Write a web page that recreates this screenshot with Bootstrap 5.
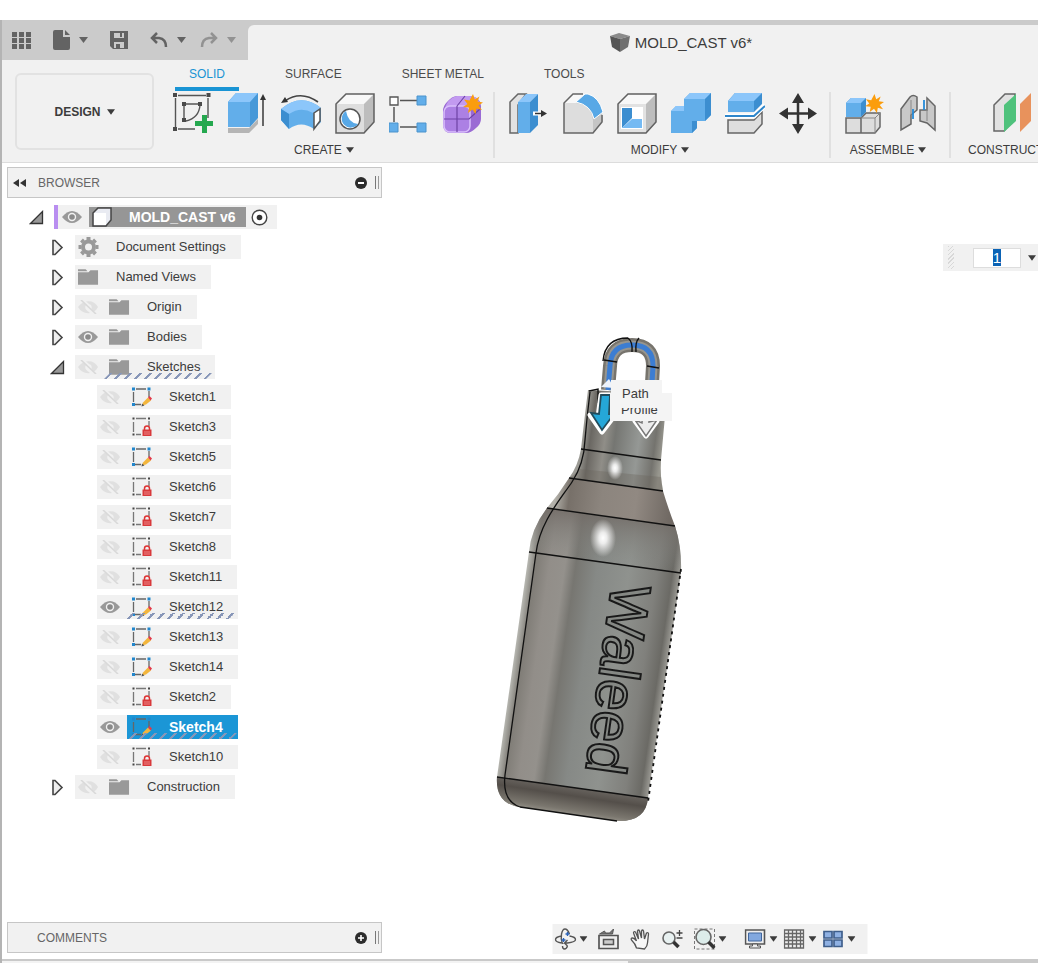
<!DOCTYPE html>
<html lang="en">
<head>
<meta charset="utf-8">
<meta name="viewport" content="width=device-width, initial-scale=1">
<title>MOLD_CAST v6</title>
<link rel="stylesheet" href="https://cdn.jsdelivr.net/npm/bootstrap@5.3.0/dist/css/bootstrap.min.css">
<style>
  body { font-family: "Liberation Sans", Arial, sans-serif; font-size: 12px; line-height: 16px; color: #3c3c3c; background: #fff; padding-top: 20px; overflow-x: hidden; }
  button { background: none; border: 0; padding: 0; color: inherit; line-height: inherit; }
  svg { display: block; flex: none; }
  .app-shell { border-left: 2px solid #b4b4b4; }
  .title-bar { background: #cbcbcb; height: 40px; }
  .quick-tools { width: 246px; padding-left: 10px; gap: 22px; color: #636363; }
  .undo-tools { gap: 14px; }
  .redo-btn { color: #929292; }
  .doc-tab { background: #f1f1f1; border-top-left-radius: 6px; margin-top: 5px; padding-left: 76px; font-size: 15px; gap: 5px; }
  .ribbon { background: #f1f1f1; border-bottom: 1px solid #dcdcdc; height: 103px; }
  .workspace-btn { width: 139px; height: 77px; margin: 13px 19px 0 13px; border: 2px solid #e2e2e2; border-radius: 6px; font-weight: bold; gap: 6px; }
  .ribbon-tabs { gap: 32px; height: 31px; padding-left: 2px; }
  .ribbon-tabs a { color: #4b4b4b; text-decoration: none; padding: 6px 14px 0; border-bottom: 4px solid transparent; }
  .ribbon-tabs a.active { color: #1a94d4; border-color: #1a94d4; }
  .tool-group { border-right: 2px solid #e0e0e0; padding: 0 10px 0 14px; height: 66px; margin-top: 1px; }
  .tool-group:first-child { padding-left: 0; }
  .tool-group:last-child { border: 0; padding-left: 17px; }
  .tool-icons { gap: 14px; height: 50px; padding-top: 1px; }
  .group-label { gap: 4px; padding-right: 8px; }
  .tool-group:last-child .group-label { padding-right: 0; }
  .browser-side { width: 380px; padding: 4px 0 6px 5px; }
  .panel-head { height: 31px; border: 1px solid #c6c6c6; background: #f1f1f1; color: #666; padding: 0 2px 0 5px; }
  .grip { width: 4px; height: 13px; border-left: 1px solid #777; border-right: 1px solid #999; }
  .tree { margin: 4px 0 0; font-size: 13px; }
  .tree li { height: 30px; }
  .twist { width: 25px; }
  .lv0 { padding-left: 22px; }
  .lv1 { padding-left: 43px; }
  .lv2 { padding-left: 90px; }
  .chip { background: #f1f1f1; height: 24px; padding: 0 15px 0 3px; }
  .chip-eye { margin-right: 11px; }
  .chip-item { gap: 17px; height: 24px; position: relative; }
  .root-chip { border-left: 4px solid #b98ef0; padding: 0 9px 0 4px; }
  .root-item { background: #969696; color: #fff; font-weight: bold; font-size: 14px; height: 20px; padding: 0 10px 0 2px; margin: 0 5px 0 7px; }
  .picked { background: #1b96d6; color: #fff; font-weight: bold; font-size: 14px; padding: 0 15px 0 4px; margin: 0 -15px 0 -4px; }
  .hatched::after { content: ""; position: absolute; left: -2px; right: -9px; bottom: 0; height: 6px; transform: skewX(-45deg); background: repeating-linear-gradient(90deg, #8796b8 0 3px, transparent 3px 10px); }
  .picked.hatched::after { right: 4px; left: 4px; }
  .viewport { min-height: 680px; }
  .model { position: absolute; left: 108px; top: 167px; }
  .tip { position: absolute; background: #f4f4f4; font-size: 13px; height: 28px; line-height: 28px; padding: 0 11px; }
  .tip-path { left: 121px; top: 50px; width: 51px; }
  .tip-profile { left: 120px; top: 63px; width: 62px; line-height: 33px; }
  .count-box { position: absolute; right: 0; top: 81px; background: #f1f1f1; height: 27px; padding: 0 2px 0 5px; }
  .count-grip { width: 6px; height: 23px; background: repeating-linear-gradient(135deg, #d8d8d8 0 1px, transparent 1px 3px); margin-right: 19px; }
  .count-box input { width: 48px; height: 20px; border: 1px solid #ddd; background: #fff; text-align: center; font-size: 15px; padding: 0; outline: 0; margin-right: 7px; border-radius: 0; }
  .count-box input::selection { background: #0b63b5; color: #fff; }
  .nav-tools { position: absolute; left: 50%; bottom: 5px; transform: translateX(-50%); background: #f1f1f1; height: 30px; padding: 0 12px 0 2px; gap: 10px; }
  .nav-tools button { gap: 3px; }
  .quick-tools button { gap: 9px; }
  .view-tools { gap: 6px; margin-left: 8px; }
  .timeline { height: 4px; background: #c9c9c9; border-top: 2px solid #c9c9c9; }
  .timeline div { width: 60.400%; background: #f3f3f3; }
</style>
</head>
<body class="d-flex flex-column min-vh-100">

<svg width="0" height="0" class="position-absolute" aria-hidden="true">
  <defs>
    <symbol id="caret" viewBox="0 0 9 6"><path d="M0 0h9L4.500 6z" fill="currentColor"/></symbol>
    <symbol id="eye" viewBox="0 0 20 14"><path d="M0 7Q5 1 10 1T20 7Q15 13 10 13T0 7z" fill="#999"/><circle cx="10" cy="7" r="4.200" fill="#f1f1f1"/><circle cx="10" cy="7" r="2.800" fill="#8a8a8a"/></symbol>
    <symbol id="eye-off" viewBox="0 0 20 14"><path d="M0 7Q2 4 5 2.500L8 5Q6 8 9 10.500L12 13Q4 14 0 7zM8 1.500Q16 0 20 7Q18.500 10 16 11.500L13.500 9Q14.500 5 11 4z" fill="#e0e0e0"/><path d="M3 0L18 14" stroke="#d9d9d9" stroke-width="1.600"/></symbol>
    <symbol id="folder" viewBox="0 0 22 18"><path d="M0 1h8l2 2H0zM0 4h11l2-2h8v15H0z" fill="#999"/></symbol>
    <symbol id="open" viewBox="0 0 15 15"><path d="M13.500 1.500v12h-12z" fill="#999" stroke="#333" stroke-width="1.300"/></symbol>
    <symbol id="shut" viewBox="0 0 15 17"><path d="M3 1.500h2l7 7-7 7H3z" fill="#eee" stroke="#444" stroke-width="1.600"/></symbol>
    <symbol id="sk-edit" viewBox="0 0 21 20"><path d="M5 2h10M2.500 5v10M18 4v6M4 17.500h6" stroke="#666" stroke-width="1.300" fill="none"/><path d="M1 .500h3v3H1zM16.500.500h3v3h-3zM1 16h3v3H1z" fill="#2186cc"/><path d="M11 18.500l1-3 5-5 3 3-5 4z" fill="#f3b63d"/><path d="M17 10.500l1.500-1.500 2.500 2.500-1.500 2z" fill="#e23b4a"/><path d="M10.500 19.500l.5-3 2.500 2z" fill="#555"/></symbol>
    <symbol id="sk-lock" viewBox="0 0 21 20"><path d="M5 1.500h10M2.500 5v10M18 4v5M5 17.500h5" stroke="#777" stroke-width="1.300" fill="none"/><path d="M1.500 .500h2v2h-2zM17 .500h2v2h-2zM1.500 16.500h2v2h-2z" fill="#444"/><path d="M13.500 13v-1.500q0-2.500 2.500-2.500t2.500 2.500v1.500" fill="none" stroke="#d33" stroke-width="1.500"/><path d="M11.500 12.500h9v6.500h-9z" fill="#d83a3c"/><path d="M13 15h6M13 17h6" stroke="#f29a9a" stroke-width=".8"/></symbol>
    <symbol id="spark" viewBox="0 0 20 20"><path d="M10 0l1.800 5.500L16.500 2.500 14.500 7.500 20 8.500 15.500 11.500 19 16 13.500 14.500 12.500 20 9.500 15.500 5 19 6 13.500 0 13 4.500 10 1 5.500 6.500 6.500z" fill="#fb9d0d"/></symbol>
  </defs>
</svg>

<div class="app-shell d-flex flex-column flex-grow-1">
  <header class="title-bar d-flex">
    <div class="quick-tools d-flex align-items-center flex-shrink-0">
      <button aria-label="Data panel"><svg width="19" height="19" viewBox="0 0 19 19" fill="currentColor"><path d="M0 1h5v5H0zM7 1h5v5H7zM14 1h5v5h-5zM0 7h5v5H0zM7 7h5v5H7zM14 7h5v5h-5zM0 13h5v5H0zM7 13h5v5H7zM14 13h5v5h-5z"/></svg></button>
      <button class="d-flex align-items-center" aria-label="File"><svg width="17" height="20" viewBox="0 0 17 20" fill="currentColor"><path d="M2 0h8v7h7v11q0 2-2 2H2q-2 0-2-2V2Q0 0 2 0zM12 0l5 5h-5z"/></svg><svg width="9" height="6"><use href="#caret"/></svg></button>
      <button aria-label="Save"><svg width="18" height="18" viewBox="0 0 18 18"><path d="M0 0h18v18H3l-3-3z" fill="currentColor"/><path d="M4 2h10v5H4zM4 11h10v6H4z" fill="#cbcbcb"/><path d="M10 2h2v4h-2zM6 13h4v5H6z" fill="currentColor"/></svg></button>
      <div class="undo-tools d-flex">
        <button class="d-flex align-items-center" aria-label="Undo"><svg width="18" height="16" viewBox="0 0 18 16" fill="none" stroke="currentColor" stroke-width="2.500"><path d="M7 1L2 6l5 5M2 6h7q7 1 7 9"/></svg><svg width="9" height="6"><use href="#caret"/></svg></button>
        <button class="redo-btn d-flex align-items-center" aria-label="Redo"><svg width="18" height="16" viewBox="0 0 18 16" fill="none" stroke="currentColor" stroke-width="2.500"><path d="M11 1l5 5-5 5M16 6H9q-7 1-7 9"/></svg><svg width="9" height="6"><use href="#caret"/></svg></button>
      </div>
    </div>
    <div class="doc-tab d-flex flex-grow-1 align-items-center justify-content-center">
      <svg width="20" height="19" viewBox="0 0 20 19"><path d="M0 3L9 0l11 3-10 3z" fill="#8a8a8a"/><path d="M0 3l10 3v13L2 14z" fill="#555"/><path d="M10 6l10-3-2 11-8 5z" fill="#707070"/></svg>
      <span>MOLD_CAST v6*</span>
    </div>
  </header>

  <section class="ribbon d-flex overflow-hidden">
    <button class="workspace-btn d-flex flex-shrink-0 align-items-center justify-content-center">DESIGN <svg width="8" height="6"><use href="#caret"/></svg></button>
    <div>
      <nav class="ribbon-tabs d-flex">
        <a href="#" class="active">SOLID</a><a href="#">SURFACE</a><a href="#">SHEET METAL</a><a href="#">TOOLS</a>
      </nav>
      <div class="d-flex">
        <div class="tool-group flex-shrink-0">
          <div class="tool-icons d-flex align-items-start">
            <button aria-label="Create sketch"><svg width="40" height="42" viewBox="0 0 40 42"><path d="M5 2.500h28M2.500 5v30M35 5v20M5 36h17M13 11h13M11 13v14M27 12q-1 13-14 16" fill="none" stroke="#555" stroke-width="1.400"/><path d="M0 0h4v4H0zM33.500 0h4v4h-4zM0 34h4v4H0zM9 9h4v4H9zM25 9h4v4h-4zM9 25h4v4H9z" fill="#4a4a4a"/><path d="M29 22h5v6h6v5h-6v7h-5v-7h-7v-5h7z" fill="#25a84f"/></svg></button>
            <button aria-label="Extrude"><svg width="40" height="42" viewBox="0 0 40 42"><path d="M1 35h21l9-9v5l-9 9H1z" fill="#b5b5b5"/><path d="M1 9l8-9h22v25l-8 9H1z" fill="#4698d8"/><path d="M1 9l8-9h22l-8 9z" fill="#8cc6fa"/><path d="M1 9h22v25H1z" fill="#62aeea"/><path d="M36 33V4" stroke="#444" stroke-width="1.600"/><path d="M36 1l-3 6h6z" fill="#333"/></svg></button>
            <button aria-label="Revolve"><svg width="40" height="42" viewBox="0 0 40 42"><path d="M0 16Q20-1 40 15v14l-7 7q-13-9-25 0l-8-9z" fill="#62aeea"/><path d="M0 16Q20-1 40 15l-8 5q-12-7-24 1z" fill="#8cc6fa"/><path d="M0 16l8 5v15l-8-9z" fill="#3c8ed0"/><path d="M33 20l6-4v12l-6 8z" fill="#fff" stroke="#555" stroke-width="1.500"/><path d="M4 8Q20-3 37 9" fill="none" stroke="#444" stroke-width="1.600"/><path d="M0 10l4-6 3 5z" fill="#333"/></svg></button>
            <button aria-label="Hole"><svg width="40" height="42" viewBox="0 0 40 42"><path d="M1 11L11 1h28v28L29 40H1z" fill="#bdbdbd"/><path d="M1 11L11 1h28L29 11z" fill="#f8f8f8"/><path d="M1 11h28v29H1z" fill="#dedede"/><path d="M1 11L11 1h28v28L29 40H1z" fill="none" stroke="#606060" stroke-width="1.500"/><circle cx="15" cy="26" r="10" fill="#fff" stroke="#555" stroke-width="1.500"/><path d="M11 18a9 9 0 1 0 12 13q-10-1-12-13z" fill="#58a8e6"/></svg></button>
            <button aria-label="Pattern"><svg width="40" height="42" viewBox="0 0 40 42"><path d="M11 7.500h17M5 14v15M11 34h17" stroke="#555" stroke-width="1.500"/><path d="M1 4h8v8H1z" fill="#fff" stroke="#555" stroke-width="1.300"/><path d="M28 3h9v9h-9zM0 30h9v9H0zM28 30h9v9h-9z" fill="#62aeea" stroke="#4a93cc"/></svg></button>
            <button aria-label="Create form"><svg width="40" height="42" viewBox="0 0 40 42"><path d="M0 18Q0 13 4 9Q9 3 14 3h12Q37 3 38 13v13q0 5-5 9-5 5-10 5H8q-8 0-8-9z" fill="#9a6bd4"/><path d="M1 18Q4 5 14 3h12q9 0 10 6-9 2-11 6z" fill="#c29af0"/><rect x="1" y="13" width="26" height="26" rx="6" fill="#ac80e4" stroke="#d9bffb" stroke-width="1.500"/><path d="M1 26h25l11-10M14 13v26M14 13l8-10" stroke="#6e43a5" stroke-width="1.200" fill="none"/><use href="#spark" x="20" y="1" width="20" height="20"/></svg></button>
          </div>
          <button class="group-label d-flex align-items-center mx-auto">CREATE <svg width="8" height="6"><use href="#caret"/></svg></button>
        </div>
        <div class="tool-group flex-shrink-0">
          <div class="tool-icons d-flex align-items-start">
            <button aria-label="Press pull"><svg width="40" height="42" viewBox="0 0 40 42"><path d="M1 40V9l8-8h8L9 12v28z" fill="#e2e2e2" stroke="#666" stroke-width="1.500"/><path d="M9 9h12v31H9z" fill="#62aeea"/><path d="M9 9l8-8h12l-8 8z" fill="#8cc6fa"/><path d="M21 9l8-8v31l-8 8z" fill="#3c8ed0"/><path d="M24 20.500h10" stroke="#fff" stroke-width="4"/><path d="M26 20.500h8" stroke="#333" stroke-width="1.500"/><path d="M32 17l6 3.500-6 3.500z" fill="#333"/></svg></button>
            <button aria-label="Fillet"><svg width="40" height="42" viewBox="0 0 40 42"><path d="M1 10l9-9h12q17 4 18 27l-10 12H1z" fill="#c5c5c5"/><path d="M1 10l9-9h12l-9 9z" fill="#f8f8f8"/><path d="M1 10h12q15 2 17 17v13H1z" fill="#ddd"/><path d="M20 1H10l-9 9v30h29l9-11v-7" fill="none" stroke="#666" stroke-width="1.500"/><path d="M13 9l9-8h3q11 3 15 18l-9 7Q28 12 13 9z" fill="#58a8e6" stroke="#fff"/></svg></button>
            <button aria-label="Shell"><svg width="40" height="42" viewBox="0 0 40 42"><path d="M1 11L11 1h28v28L29 40H1z" fill="#bdbdbd"/><path d="M1 11L11 1h28L29 11z" fill="#f8f8f8"/><path d="M1 11h28v29H1z" fill="#e2e2e2"/><path d="M1 11L11 1h28v28L29 40H1z" fill="none" stroke="#606060" stroke-width="1.500"/><path d="M4 14h22v22H4z" fill="#fff"/><path d="M5 15h10v10L5 35z" fill="#3c8ed0"/><path d="M5 35l10-9h10v9z" fill="#75baf3"/></svg></button>
            <button aria-label="Combine"><svg width="40" height="42" viewBox="0 0 40 42"><path d="M0 18l5-5h8V6l6-6h21v22l-6 6h-8v7l-5 5H0z" fill="#62aeea"/><path d="M0 18l5-5h8v5zM13 6l6-6h21l-6 6z" fill="#8cc6fa"/><path d="M34 6l6-6v22l-6 6zM21 28h5v7l-5 5z" fill="#3c8ed0"/></svg></button>
            <button aria-label="Split body"><svg width="40" height="42" viewBox="0 0 40 42"><path d="M3 8l7-8h27v11l-8 8H3z" fill="#3c8ed0"/><path d="M3 8h26v11H3z" fill="#62aeea"/><path d="M3 8l7-8h27l-8 8z" fill="#8cc6fa"/><path d="M3 27h26l8-8v12l-8 9H3z" fill="#dedede" stroke="#666" stroke-width="1.500"/><path d="M0 23h29L40 12" stroke="#fff" stroke-width="5" fill="none"/><path d="M0 23h29L40 13" stroke="#2e86cb" stroke-width="2" fill="none"/></svg></button>
            <button aria-label="Move"><svg width="40" height="42" viewBox="0 0 40 42"><path d="M19 5v32M4 20.500h32" stroke="#333" stroke-width="2.500"/><path d="M19 0l6 10H13zM19 41l6-10H13zM0 20.500l9-6v12zM38 20.500l-9-6v12z" fill="#333"/></svg></button>
          </div>
          <button class="group-label d-flex align-items-center mx-auto">MODIFY <svg width="8" height="6"><use href="#caret"/></svg></button>
        </div>
        <div class="tool-group flex-shrink-0">
          <div class="tool-icons d-flex align-items-start">
            <button aria-label="New component"><svg width="40" height="42" viewBox="0 0 40 42"><path d="M1 25h15v15H1zM16 25l5-5h14v14l-5 6H16z" fill="#ddd" stroke="#666" stroke-width="1.500"/><path d="M16 25h14v15M30 25l5-5" stroke="#888" fill="none"/><path d="M1 10l5-5h15v14l-5 5H1z" fill="#3c8ed0"/><path d="M1 10h15v14H1z" fill="#62aeea"/><path d="M1 10l5-5h15l-5 5z" fill="#8cc6fa"/><use href="#spark" x="20" y="1" width="19" height="19"/></svg></button>
            <button aria-label="Joint"><svg width="40" height="42" viewBox="0 0 40 42"><path d="M2 16L11 4q3-3 7 0v13l-6 5v9l-10 6z" fill="#c8c8c8" stroke="#666" stroke-width="1.500"/><path d="M12 7v15" stroke="#888"/><path d="M28 5l8 8v24l-8-7-7-2V17h7z" fill="#c8c8c8" stroke="#666" stroke-width="1.500"/><path d="M28 6v22" stroke="#888"/><path d="M14 16v10M25 7v10" stroke="#258ad8" stroke-width="1.800"/></svg></button>
          </div>
          <button class="group-label d-flex align-items-center mx-auto">ASSEMBLE <svg width="8" height="6"><use href="#caret"/></svg></button>
        </div>
        <div class="tool-group flex-shrink-0">
          <div class="tool-icons d-flex align-items-start justify-content-center">
            <button aria-label="Offset plane"><svg width="40" height="42" viewBox="0 0 40 42"><path d="M2 12L13 1h10v25L12 38H2z" fill="#e2e2e2" stroke="#666" stroke-width="1.500"/><path d="M12 12L24 1v27L12 39z" fill="#4fc27c"/><path d="M28 11L39 0v28L28 39z" fill="#e8925c"/></svg></button>
          </div>
          <button class="group-label d-flex align-items-center mx-auto">CONSTRUCT <svg width="8" height="6"><use href="#caret"/></svg></button>
        </div>
      </div>
    </div>
  </section>

  <div class="d-flex flex-grow-1">
    <aside class="browser-side d-flex flex-column flex-shrink-0">
      <div class="panel-head d-flex align-items-center justify-content-between">
        <div class="d-flex align-items-center"><svg width="13" height="8" viewBox="0 0 13 8" class="me-2"><path d="M6 0v8L0 4zM13 0v8L7 4z" fill="#333"/></svg><span class="ms-1">BROWSER</span></div>
        <div class="d-flex align-items-center"><button class="me-2" aria-label="Collapse"><svg width="12" height="12" viewBox="0 0 12 12"><circle cx="6" cy="6" r="6" fill="#2c2c2c"/><path d="M3 6h6" stroke="#fff" stroke-width="2"/></svg></button><span class="grip"></span></div>
      </div>
      <ul class="tree list-unstyled">
        <li class="lv0 d-flex align-items-center"><button class="twist" aria-label="Collapse"><svg width="15" height="15"><use href="#open"/></svg></button><div class="chip root-chip d-flex align-items-center"><svg width="20" height="14"><use href="#eye"/></svg><div class="root-item d-flex align-items-center"><svg width="22" height="20" viewBox="0 0 22 20"><path d="M2 6l5-5h13v12l-5 6H2z" fill="#e9ebf2" stroke="#444" stroke-width="1.500"/><path d="M3 6h12v12H3z" fill="#fff"/></svg><span class="ms-3">MOLD_CAST v6</span></div><input type="radio" name="active-part" class="visually-hidden" id="part-on" checked><label for="part-on" aria-label="Activate component"><svg width="17" height="17" viewBox="0 0 17 17"><circle cx="8.500" cy="8.500" r="7.300" fill="#fff" stroke="#444" stroke-width="1.400"/><circle cx="8.500" cy="8.500" r="2.800" fill="#333"/></svg></label></div></li>
        <li class="lv1 d-flex align-items-center"><button class="twist" aria-label="Expand"><svg width="15" height="17"><use href="#shut"/></svg></button><div class="chip d-flex"><div class="chip-item d-flex align-items-center"><svg width="21" height="20" viewBox="-10.500 -10 21 20"><circle r="5.500" fill="none" stroke="#999" stroke-width="4"/><g stroke="#999" stroke-width="4"><path d="M0-7v-3M0 7v3M-7 0h-3M7 0h3M-5-5l-2-2M5 5l2 2M-5 5l-2 2M5-5l2-2"/></g></svg>Document Settings</div></div></li>
        <li class="lv1 d-flex align-items-center"><button class="twist" aria-label="Expand"><svg width="15" height="17"><use href="#shut"/></svg></button><div class="chip d-flex"><div class="chip-item d-flex align-items-center"><svg width="21" height="18"><use href="#folder"/></svg>Named Views</div></div></li>
        <li class="lv1 d-flex align-items-center"><button class="twist" aria-label="Expand"><svg width="15" height="17"><use href="#shut"/></svg></button><div class="chip d-flex align-items-center"><svg class="chip-eye" width="20" height="14"><use href="#eye-off"/></svg><div class="chip-item d-flex align-items-center"><svg width="21" height="18"><use href="#folder"/></svg>Origin</div></div></li>
        <li class="lv1 d-flex align-items-center"><button class="twist" aria-label="Expand"><svg width="15" height="17"><use href="#shut"/></svg></button><div class="chip d-flex align-items-center"><svg class="chip-eye" width="20" height="14"><use href="#eye"/></svg><div class="chip-item d-flex align-items-center"><svg width="21" height="18"><use href="#folder"/></svg>Bodies</div></div></li>
        <li class="lv1 d-flex align-items-center"><button class="twist" aria-label="Collapse"><svg width="15" height="15"><use href="#open"/></svg></button><div class="chip d-flex align-items-center"><svg class="chip-eye" width="20" height="14"><use href="#eye-off"/></svg><div class="chip-item hatched d-flex align-items-center"><svg width="21" height="18"><use href="#folder"/></svg>Sketches</div></div></li>
        <li class="lv2 d-flex align-items-center"><div class="chip d-flex align-items-center"><svg class="chip-eye" width="20" height="14"><use href="#eye-off"/></svg><div class="chip-item d-flex align-items-center"><svg width="21" height="20"><use href="#sk-edit"/></svg>Sketch1</div></div></li>
        <li class="lv2 d-flex align-items-center"><div class="chip d-flex align-items-center"><svg class="chip-eye" width="20" height="14"><use href="#eye-off"/></svg><div class="chip-item d-flex align-items-center"><svg width="21" height="20"><use href="#sk-lock"/></svg>Sketch3</div></div></li>
        <li class="lv2 d-flex align-items-center"><div class="chip d-flex align-items-center"><svg class="chip-eye" width="20" height="14"><use href="#eye-off"/></svg><div class="chip-item d-flex align-items-center"><svg width="21" height="20"><use href="#sk-edit"/></svg>Sketch5</div></div></li>
        <li class="lv2 d-flex align-items-center"><div class="chip d-flex align-items-center"><svg class="chip-eye" width="20" height="14"><use href="#eye-off"/></svg><div class="chip-item d-flex align-items-center"><svg width="21" height="20"><use href="#sk-lock"/></svg>Sketch6</div></div></li>
        <li class="lv2 d-flex align-items-center"><div class="chip d-flex align-items-center"><svg class="chip-eye" width="20" height="14"><use href="#eye-off"/></svg><div class="chip-item d-flex align-items-center"><svg width="21" height="20"><use href="#sk-lock"/></svg>Sketch7</div></div></li>
        <li class="lv2 d-flex align-items-center"><div class="chip d-flex align-items-center"><svg class="chip-eye" width="20" height="14"><use href="#eye-off"/></svg><div class="chip-item d-flex align-items-center"><svg width="21" height="20"><use href="#sk-lock"/></svg>Sketch8</div></div></li>
        <li class="lv2 d-flex align-items-center"><div class="chip d-flex align-items-center"><svg class="chip-eye" width="20" height="14"><use href="#eye-off"/></svg><div class="chip-item d-flex align-items-center"><svg width="21" height="20"><use href="#sk-lock"/></svg>Sketch11</div></div></li>
        <li class="lv2 d-flex align-items-center"><div class="chip d-flex align-items-center"><svg class="chip-eye" width="20" height="14"><use href="#eye"/></svg><div class="chip-item hatched d-flex align-items-center"><svg width="21" height="20"><use href="#sk-edit"/></svg>Sketch12</div></div></li>
        <li class="lv2 d-flex align-items-center"><div class="chip d-flex align-items-center"><svg class="chip-eye" width="20" height="14"><use href="#eye-off"/></svg><div class="chip-item d-flex align-items-center"><svg width="21" height="20"><use href="#sk-edit"/></svg>Sketch13</div></div></li>
        <li class="lv2 d-flex align-items-center"><div class="chip d-flex align-items-center"><svg class="chip-eye" width="20" height="14"><use href="#eye-off"/></svg><div class="chip-item d-flex align-items-center"><svg width="21" height="20"><use href="#sk-edit"/></svg>Sketch14</div></div></li>
        <li class="lv2 d-flex align-items-center"><div class="chip d-flex align-items-center"><svg class="chip-eye" width="20" height="14"><use href="#eye-off"/></svg><div class="chip-item d-flex align-items-center"><svg width="21" height="20"><use href="#sk-lock"/></svg>Sketch2</div></div></li>
        <li class="lv2 d-flex align-items-center"><div class="chip d-flex align-items-center"><svg class="chip-eye" width="20" height="14"><use href="#eye"/></svg><div class="chip-item picked hatched d-flex align-items-center"><svg width="21" height="20"><use href="#sk-edit"/></svg>Sketch4</div></div></li>
        <li class="lv2 d-flex align-items-center"><div class="chip d-flex align-items-center"><svg class="chip-eye" width="20" height="14"><use href="#eye-off"/></svg><div class="chip-item d-flex align-items-center"><svg width="21" height="20"><use href="#sk-lock"/></svg>Sketch10</div></div></li>
        <li class="lv1 d-flex align-items-center"><button class="twist" aria-label="Expand"><svg width="15" height="17"><use href="#shut"/></svg></button><div class="chip d-flex align-items-center"><svg class="chip-eye" width="20" height="14"><use href="#eye-off"/></svg><div class="chip-item d-flex align-items-center"><svg width="21" height="18"><use href="#folder"/></svg>Construction</div></div></li>
      </ul>
      <div class="panel-head d-flex align-items-center justify-content-between mt-auto">
        <span class="ps-4">COMMENTS</span>
        <div class="d-flex align-items-center"><button class="me-2" aria-label="Expand"><svg width="12" height="12" viewBox="0 0 12 12"><circle cx="6" cy="6" r="6" fill="#2c2c2c"/><path d="M3 6h6M6 3v6" stroke="#fff" stroke-width="1.600"/></svg></button><span class="grip"></span></div>
      </div>
    </aside>

    <main class="viewport position-relative flex-grow-1">
      <div class="model">
        <svg width="200" height="500" viewBox="490 330 200 500" role="img" aria-label="Bottle model">
          <defs>
            <linearGradient id="metal" gradientUnits="userSpaceOnUse" x1="514" y1="660" x2="666" y2="682">
              <stop offset="0" stop-color="#b5b5af"/><stop offset=".05" stop-color="#807d77"/><stop offset=".14" stop-color="#928e89"/><stop offset=".24" stop-color="#94918c"/><stop offset=".31" stop-color="#777671"/><stop offset=".45" stop-color="#868986"/><stop offset=".66" stop-color="#8f928e"/><stop offset=".84" stop-color="#80807c"/><stop offset=".94" stop-color="#6b6a65"/><stop offset="1" stop-color="#a4a39d"/>
            </linearGradient>
            <linearGradient id="neck" gradientUnits="userSpaceOnUse" x1="582" y1="440" x2="662" y2="451">
              <stop offset="0" stop-color="#9b9a94"/><stop offset=".1" stop-color="#6a6762"/><stop offset=".28" stop-color="#908e88"/><stop offset=".4" stop-color="#757672"/><stop offset=".7" stop-color="#959895"/><stop offset=".9" stop-color="#74736e"/><stop offset="1" stop-color="#98978f"/>
            </linearGradient>
            <linearGradient id="cone" gradientUnits="userSpaceOnUse" x1="556" y1="492" x2="670" y2="508">
              <stop offset="0" stop-color="#b4b2ab"/><stop offset=".12" stop-color="#777069"/><stop offset=".4" stop-color="#8c857e"/><stop offset=".7" stop-color="#918982"/><stop offset="1" stop-color="#716a64"/>
            </linearGradient>
            <linearGradient id="base" gradientUnits="userSpaceOnUse" x1="576" y1="782" x2="570" y2="822">
              <stop offset="0" stop-color="#74706b"/><stop offset=".35" stop-color="#544f4a"/><stop offset=".7" stop-color="#7a766e"/><stop offset="1" stop-color="#b4b1a7"/>
            </linearGradient>
            <linearGradient id="shoulder" gradientUnits="userSpaceOnUse" x1="610" y1="515" x2="605" y2="563"><stop offset="0" stop-color="#716a65" stop-opacity=".8"/><stop offset="1" stop-color="#858783" stop-opacity="0"/></linearGradient>
            <radialGradient id="shine"><stop offset="0" stop-color="#fff"/><stop offset=".3" stop-color="#fff" stop-opacity=".85"/><stop offset="1" stop-color="#fff" stop-opacity="0"/></radialGradient>
          </defs>
          <path d="M547 508Q531 529 529 552L497 777Q495 804 520 807L617 821Q646 822 648 798L681 572Q682 548 675 526z" fill="url(#metal)"/>
          <path d="M547 508Q531 529 529 552L681 572Q682 548 675 526z" fill="url(#shoulder)"/>
          <path d="M569 478Q559 494 547 508L675 526Q668 508 663 491z" fill="url(#cone)"/>
          <path d="M588 390Q584 422 581 449Q578 466 569 478L663 491Q660 476 661 460L667 394z" fill="url(#neck)"/>
          <path d="M579 469Q576 474 569 478L663 491L661 477z" fill="#6b635d" opacity=".35"/>
          <path d="M497 777Q495 804 520 807L617 821Q646 822 648 798z" fill="url(#base)"/>
          <ellipse cx="615" cy="468" rx="8" ry="12" fill="url(#shine)"/>
          <ellipse cx="603" cy="538" rx="13" ry="19" fill="url(#shine)"/>
          <g fill="none" stroke="#111" stroke-width="1.300">
            <path d="M581 449l80 11M569 478l94 13M547 508l128 18M529 552l152 21M497 777l151 21M520 807l97 14"/>
            <path d="M590 392Q587 416 585 440Q584 464 572 482C560 500 540 522 536 553L505 775Q502 801 520 807"/>
            <path d="M681 569L648 802" stroke-width="1.800" stroke-dasharray="3 4"/>
          </g>
          <path d="M608 390L610 366Q611 345 632 345Q653 345 653 366L651 400" fill="none" stroke="#77746d" stroke-width="14"/>
          <path d="M608 390L610 366Q611 345 632 345Q653 345 653 366L651 400" fill="none" stroke="#97958e" stroke-width="9"/>
          <path d="M608 390L610 366Q611 345 632 345Q653 345 653 366L651 400" fill="none" stroke="#3c7dd2" stroke-width="5"/>
          <path d="M603 361q2-23 25-23M604 360l13 2M647 366l12 2M628 338q5 4 4 14M639 338q-4 4-3 14M589 391l9-2v14" fill="none" stroke="#111" stroke-width="1.400"/>
          <path d="M601 387l8-8 5 9z" fill="#eef3fb"/>
          <path d="M601 395h9l-1 22 6-2-13 17-12-17 8 2z" fill="#fff" stroke="#fff" stroke-width="5" stroke-linejoin="round"/>
          <path d="M601 395h9l-1 19 5 0-12 16-11-17 8 1z" fill="#25a7d8" stroke="#234c5c" stroke-width="1.800"/>
          <path d="M643 409h7l-1 12 8 0-11 15-11-15 7 1z" fill="#ededed" stroke="#fff" stroke-width="5" stroke-linejoin="round"/>
          <path d="M643 409h7l-1 13 8-2-11 16-11-16 7 3z" fill="#ededed" stroke="#777" stroke-width="1.500"/>
          <text transform="translate(612 582) rotate(98)" font-family="Liberation Sans, Arial, sans-serif" font-size="57" fill="#858884" stroke="#191919" stroke-width="2">Waleed</text>
        </svg>
        <div class="tip tip-profile">Profile</div>
        <div class="tip tip-path">Path</div>
      </div>

      <div class="count-box d-flex align-items-center">
        <span class="count-grip"></span>
        <input type="text" id="count" value="1" aria-label="Value">
        <button aria-label="Options"><svg width="8" height="6"><use href="#caret"/></svg></button>
      </div>

      <div class="nav-tools d-flex align-items-center">
        <button class="d-flex align-items-center" aria-label="Orbit"><svg width="22" height="22" viewBox="0 0 22 22" fill="none" stroke="#555" stroke-width="1.400"><path d="M7 15Q1 14 1 11.500T7 8M15 8q6 1 6 3.500t-8 3.500h-3l3-3M10 15l3 3M8 16Q6 11 7 6t3.500-5T15 6M13 18q-1 3-3 3t-2-3"/><path d="M7 12h4M9 10v4M11 6h4M13 4v4" stroke="#2a62b8"/></svg><svg width="8" height="6"><use href="#caret"/></svg></button>
        <button aria-label="Look at"><svg width="22" height="22" viewBox="0 0 22 22"><path d="M1.500 7.500h19v13h-19z" fill="#eee" stroke="#555" stroke-width="1.700"/><path d="M6 11.500h10v5H6z" fill="#ccc" stroke="#555" stroke-width="1.500"/><path d="M2 6l5-3 1 2h4l4-4-1 5z" fill="#777" stroke="#555"/></svg></button>
        <button aria-label="Pan"><svg width="22" height="22" viewBox="0 0 22 22"><path d="M7 20Q6 16 2 12q-1-2 1-2t4 3L4 5q0-2 2-1l3 7-1-8q1-2 2 0l2 7V3q1-2 2 0l1 8 2-6q2-1 2 1l-1 9q0 3-3 6z" fill="#f7f7f7" stroke="#555" stroke-width="1.300"/></svg></button>
        <button aria-label="Zoom"><svg width="22" height="22" viewBox="0 0 22 22"><circle cx="7.500" cy="10" r="6" fill="#e8f1f1" stroke="#666" stroke-width="1.600"/><path d="M12 14l5 5" stroke="#333" stroke-width="3.500"/><path d="M15 5h6M18 2v6M15 10h6" stroke="#444" stroke-width="1.300"/></svg></button>
        <button class="d-flex align-items-center" aria-label="Fit"><svg width="22" height="22" viewBox="0 0 22 22"><path d="M1 1h20v20H1z" fill="none" stroke="#777" stroke-dasharray="3 2"/><circle cx="10" cy="9" r="7.500" fill="#dcecea" stroke="#666" stroke-width="1.600"/><path d="M15 14l6 6" stroke="#333" stroke-width="3.500"/></svg><svg width="8" height="6"><use href="#caret"/></svg></button>
        <div class="view-tools d-flex">
          <button class="d-flex align-items-center" aria-label="Display settings"><svg width="22" height="22" viewBox="0 0 22 22"><path d="M1 2h19v14H1z" fill="#eee" stroke="#555" stroke-width="1.600"/><path d="M4 5h13v8H4z" fill="#82a8df" stroke="#41669d"/><path d="M8 16h5v2h3v2H5v-2h3z" fill="#eee" stroke="#555"/></svg><svg width="8" height="6"><use href="#caret"/></svg></button>
          <button class="d-flex align-items-center" aria-label="Grid settings"><svg width="22" height="22" viewBox="0 0 22 22"><path d="M1 2h19v18H1zM5 2v18M9 2v18M13 2v18M17 2v18M1 5.500h19M1 9h19M1 12.500h19M1 16h19" fill="#eee" stroke="#666" stroke-width="1.300"/></svg><svg width="8" height="6"><use href="#caret"/></svg></button>
          <button class="d-flex align-items-center" aria-label="Viewports"><svg width="22" height="22" viewBox="0 0 22 22"><path d="M1.500 3.500h8v6.500h-8zM11.500 3.500h8v6.500h-8zM1.500 12h8v6.500h-8zM11.500 12h8v6.500h-8z" fill="#8fb1e3" stroke="#3f5f8c" stroke-width="1.700"/></svg><svg width="8" height="6"><use href="#caret"/></svg></button>
        </div>
      </div>
    </main>
  </div>
  <footer class="timeline d-flex"><div></div></footer>
</div>

<script src="https://cdn.jsdelivr.net/npm/bootstrap@5.3.0/dist/js/bootstrap.bundle.min.js"></script>
<script>
  document.getElementById('count').select();
</script>
</body>
</html>
